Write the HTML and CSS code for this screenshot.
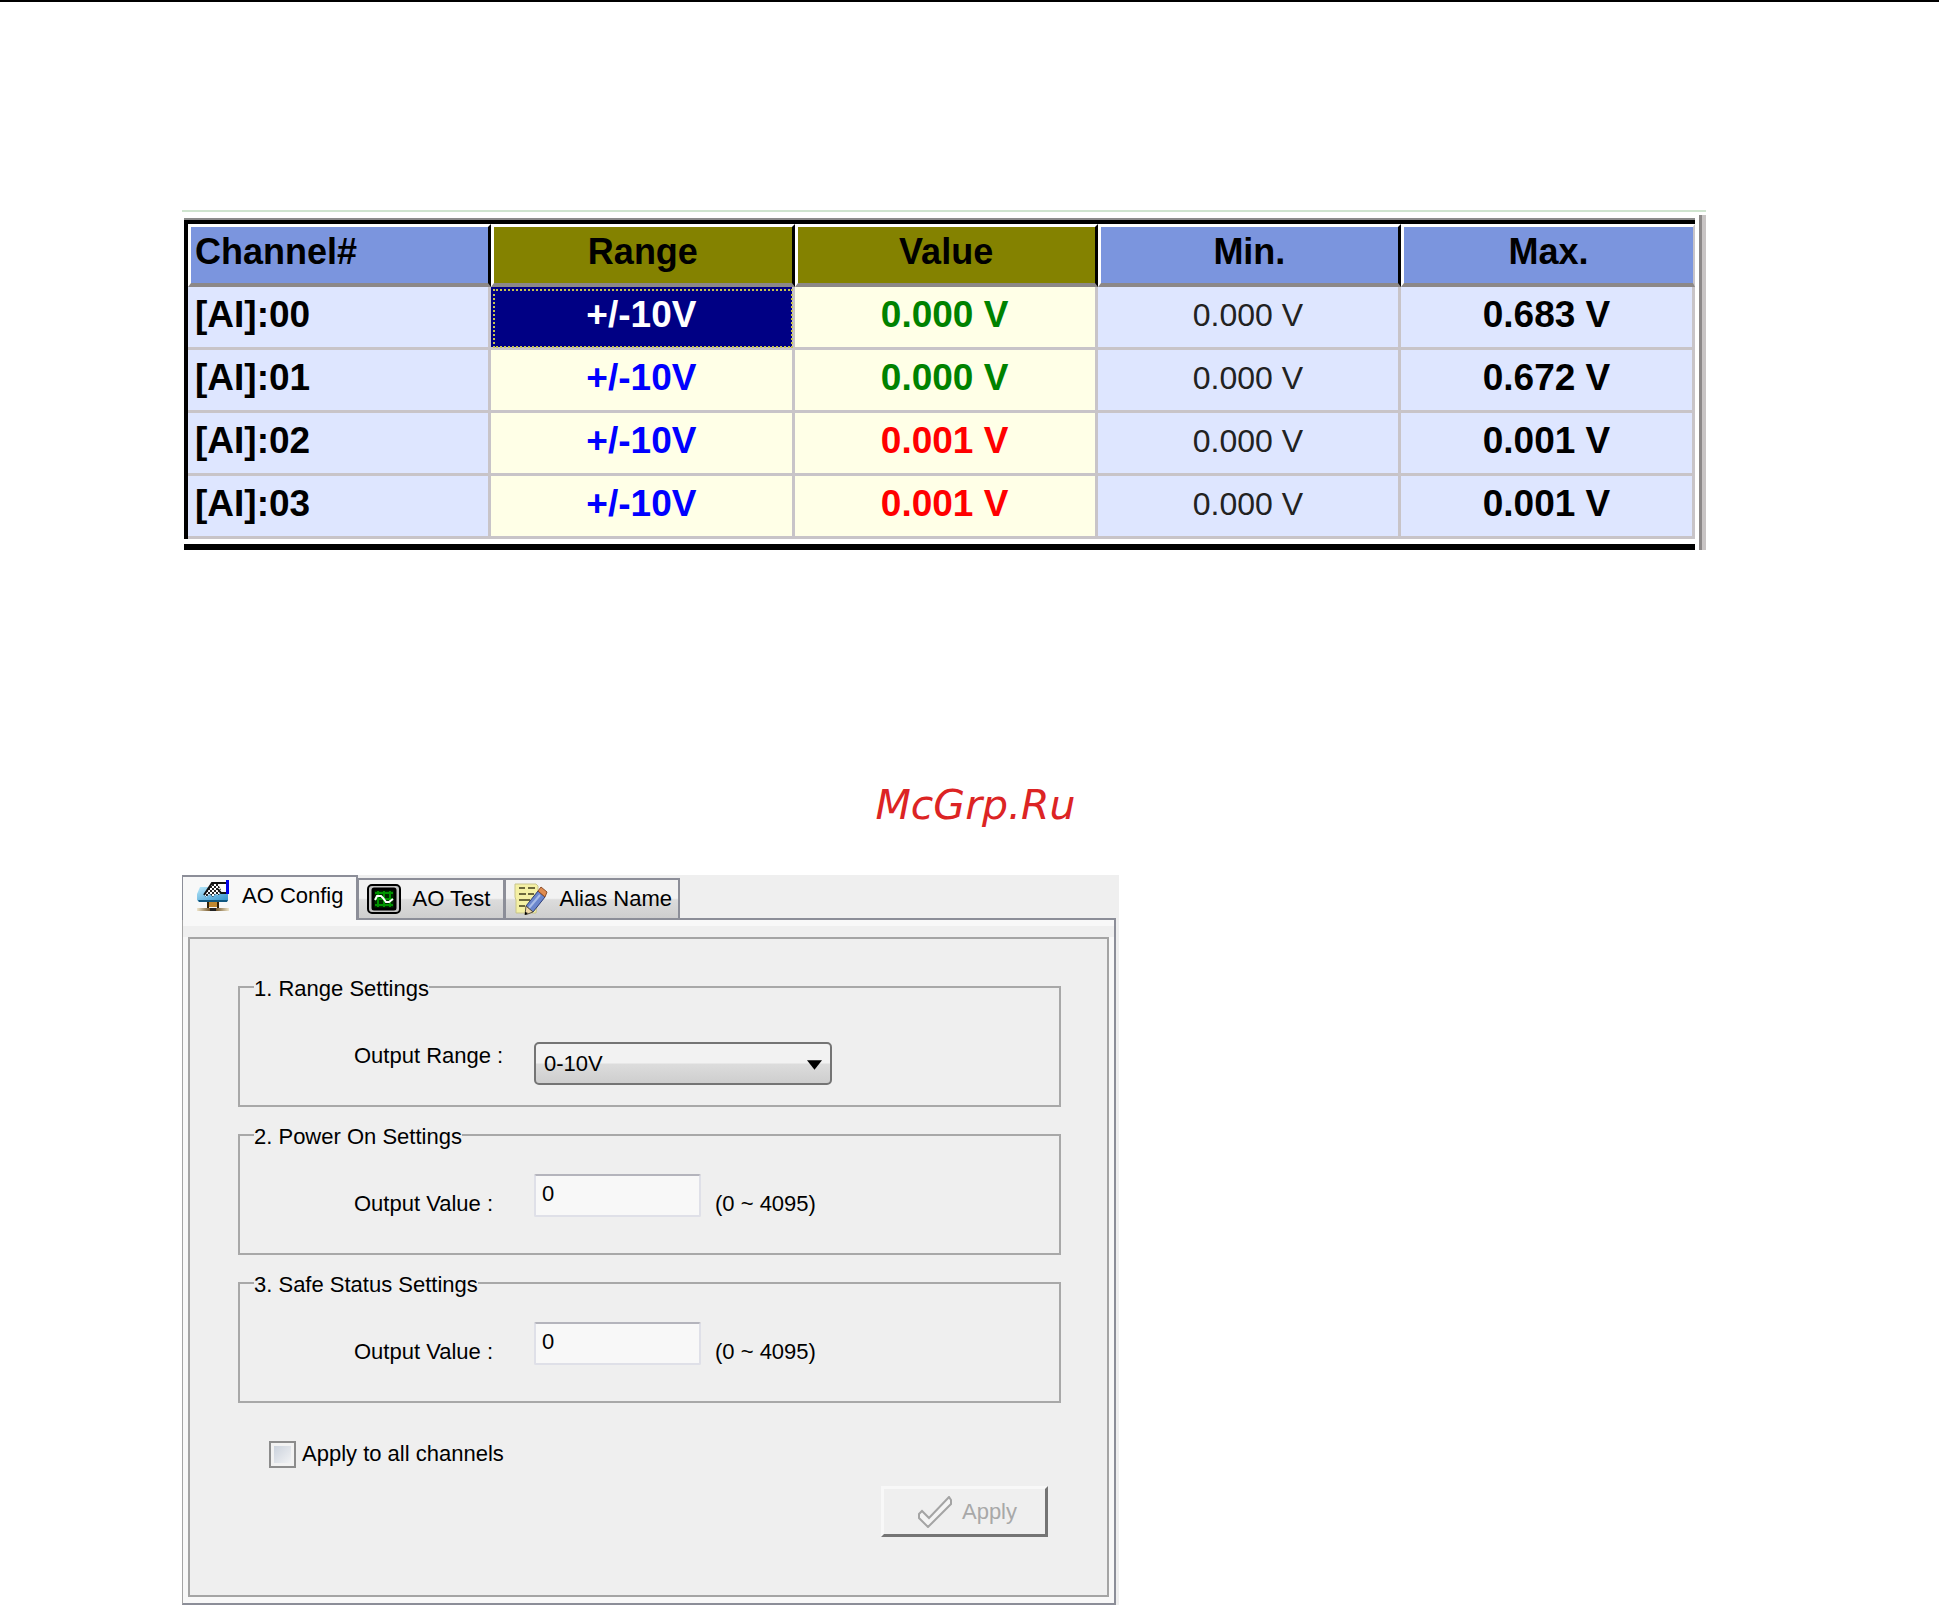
FILE: index.html
```html
<!DOCTYPE html>
<html lang="en">
<head>
<meta charset="utf-8">
<title>Analog channels</title>
<link rel="stylesheet" href="styles.css">
</head>
<body>
<main class="page">
  <section class="monitor">
    <div class="monitor-grid">
      <table class="channels">
        <colgroup><col><col><col><col><col class="col-last"></colgroup>
        <thead>
          <tr><th class="name" scope="col">Channel#</th><th class="olive" scope="col">Range</th><th class="olive" scope="col">Value</th><th scope="col">Min.</th><th scope="col">Max.</th></tr>
        </thead>
        <tbody>
          <tr><th class="name" scope="row">[AI]:00</th><td class="range selected">+/-10V</td><td class="value ok">0.000 V</td><td class="min">0.000 V</td><td>0.683 V</td></tr>
          <tr><th class="name" scope="row">[AI]:01</th><td class="range">+/-10V</td><td class="value ok">0.000 V</td><td class="min">0.000 V</td><td>0.672 V</td></tr>
          <tr><th class="name" scope="row">[AI]:02</th><td class="range">+/-10V</td><td class="value bad">0.001 V</td><td class="min">0.000 V</td><td>0.001 V</td></tr>
          <tr><th class="name" scope="row">[AI]:03</th><td class="range">+/-10V</td><td class="value bad">0.001 V</td><td class="min">0.000 V</td><td>0.001 V</td></tr>
        </tbody>
      </table>
    </div>
    <div class="monitor-edge"></div>
  </section>

  <p class="brand">McGrp.Ru</p>

  <form class="config">
    <div class="tabs" role="tablist">
      <button class="tab active" type="button" role="tab" aria-selected="true">
        <svg class="icon" viewBox="0 0 34 32" aria-hidden="true">
          <defs>
            <linearGradient id="sea" x1="0" y1="0" x2="1" y2="1"><stop offset="0" stop-color="#b8e8fa"/><stop offset="1" stop-color="#2a8cc8"/></linearGradient>
            <linearGradient id="base" x1="0" x2="1"><stop offset="0" stop-color="#efe6cc"/><stop offset=".5" stop-color="#5a3808"/><stop offset="1" stop-color="#efe6cc"/></linearGradient>
            <pattern id="knit" width="4" height="4" patternUnits="userSpaceOnUse"><path d="M0 0h4v4H0z" fill="#fff"/><path d="M0 0h2v2H0zM2 2h2v2H2z" fill="#222"/></pattern>
          </defs>
          <path d="M4 7h26l2 6v7l-2 2H3l-2-2v-6z" fill="url(#sea)"/>
          <path d="M2 20h30l-1 2H3z" fill="#10577f"/>
          <path d="M13 22h8v5h-8z" fill="#c08830"/>
          <path d="M12 22v6M22 22v6" stroke="#302008" stroke-width="2"/>
          <path d="M1 28h32v3H1z" fill="url(#base)"/>
          <path d="M14 28h6v3h-6z" fill="#222"/>
          <path d="M18 3h12v10h-6l-3-4z" fill="#f8f8f8"/>
          <path d="M8 14 15 4h7l3 6-2 5-4-1-2 3-3-3-4 3z" fill="url(#knit)"/>
          <path d="M8 15 16 3h14M22 9l3 4h6" fill="none" stroke="#111" stroke-width="2"/>
          <path d="M30 0h3v14h-3z" fill="#0000e8"/>
        </svg>
        AO Config
      </button>
      <button class="tab" type="button" role="tab" aria-selected="false">
        <svg class="icon" viewBox="0 0 34 32" aria-hidden="true">
          <rect x="1" y="2" width="32" height="28" rx="4" fill="#c4c4c4" stroke="#000" stroke-width="2"/>
          <rect x="6" y="6" width="22" height="20" rx="1" fill="#002c00" stroke="#000" stroke-width="3"/>
          <path d="M8 10h18M8 16h18M8 22h18M11 8v16M17 8v16M23 8v16" stroke="#009400" stroke-width="2"/>
          <path d="M8 17l2-4h4l2 2 3 4h3l4-3" fill="none" stroke="#fff" stroke-width="2"/>
        </svg>
        AO Test
      </button>
      <button class="tab" type="button" role="tab" aria-selected="false">
        <svg class="icon" viewBox="0 0 34 32" aria-hidden="true">
          <path d="M1 1h21l2 2v10l-2 17H2V17L1 14z" fill="#f4f0a4" stroke="#c8c48c" stroke-width="1"/>
          <path d="M5 5h6M14 5h7M5 11h7M14 11h6M5 17h11M5 23h6" stroke="#6c683c" stroke-width="2"/>
          <path d="M24 8l7 6-12 15-7-6z" fill="#6b86cc" stroke="#2c3c78" stroke-width="1"/>
          <path d="M26 12 15 25" stroke="#a8bce8" stroke-width="2"/>
          <path d="M24 8l3-4 6 5-2 5z" fill="#e08c50" stroke="#8c4c28" stroke-width="1"/>
          <path d="M12 23l7 6-8 3z" fill="#f0d8a8" stroke="#585040" stroke-width="1"/>
          <path d="M11 29l3 1-3 2z" fill="#000"/>
        </svg>
        Alias Name
      </button>
    </div>

    <div class="body">
      <div class="panel">
        <fieldset class="group">
          <legend>1. Range Settings</legend>
          <div class="row">
            <label class="caption" for="range">Output Range :</label>
            <div class="select-wrap">
              <select class="select" id="range"><option>0-10V</option></select>
              <svg class="arrow" viewBox="0 0 16 10" aria-hidden="true"><path d="M0 0h16L8 10z"/></svg>
            </div>
          </div>
        </fieldset>
        <fieldset class="group">
          <legend>2. Power On Settings</legend>
          <div class="row">
            <label class="caption" for="power">Output Value :</label>
            <input class="field" id="power" type="text" value="0">
            <span class="hint">(0 ~ 4095)</span>
          </div>
        </fieldset>
        <fieldset class="group">
          <legend>3. Safe Status Settings</legend>
          <div class="row">
            <label class="caption" for="safe">Output Value :</label>
            <input class="field" id="safe" type="text" value="0">
            <span class="hint">(0 ~ 4095)</span>
          </div>
        </fieldset>
        <label class="all"><input class="check" type="checkbox">Apply to all channels</label>
        <div class="actions">
          <button class="apply" type="button" disabled>
            <svg class="icon" viewBox="0 0 34 32" aria-hidden="true"><path d="M1 18l3-3 7 7L31 1l2 3v4L14 27l-4 4-9-9z" fill="#f4f4f4" stroke="#a4a4a4" stroke-width="2"/></svg>
            Apply
          </button>
        </div>
      </div>
    </div>
  </form>
</main>
</body>
</html>
```
FILE: styles.css
```css
* { box-sizing: border-box; }

body {
  margin: 0;
  background: #fff;
  color: #000;
  font-family: "Liberation Sans", Arial, sans-serif;
  font-size: 22px;
  line-height: 28px;
}

button, input, select { font: inherit; color: inherit; }

.page { border-top: 2px solid #000; padding-top: 208px; }

/* Channel monitor */
.monitor {
  display: flex;
  gap: 4px;
  margin: 0 233px 0 182px;
  border-top: 2px solid #cfe4cf;
}

.monitor-grid {
  flex: 1;
  margin: 6px 0 0 2px;
  border-top: 2px solid #8c8c8c;
  border-bottom: 6px solid #000;
}

.monitor-edge {
  width: 7px;
  margin-top: 3px;
  background: #c8c4c4;
  border-left: 3px solid #8c8888;
}

.channels {
  width: 100%;
  table-layout: fixed;
  border-collapse: separate;
  border-spacing: 0;
  border-top: 4px solid #000;
  border-left: 4px solid #000;
  margin-bottom: 5px;
  font-size: 37px;
  line-height: 40px;
  text-align: center;
}

.col-last { width: 294px; }

.channels th, .channels td { padding: 0; font-weight: bold; }

.channels thead th {
  height: 63px;
  padding-bottom: 6px;
  background: #7b95de;
  border: solid #fff;
  border-width: 3px 3px 4px 3px;
  border-right-color: #000;
  border-bottom-color: #8c8888;
  font-size: 36px;
}

.channels thead .olive { background: #848200; }
.channels thead th:last-child { border-right: 2px solid #c8c4c8; }

.channels tbody th, .channels tbody td {
  height: 63px;
  padding-bottom: 5px;
  background: #dee6ff;
  border: solid #c8c4c8;
  border-width: 0 3px 3px 0;
}

.channels tbody .name { text-align: left; padding-left: 7px; }
.channels thead .name { text-align: left; padding-left: 4px; }
.channels tbody .range { background: #ffffe7; color: #00f; }
.channels tbody .value { background: #ffffe7; }
.channels tbody .selected { background: #000084; color: #fff; outline: 2px dotted #c8c450; outline-offset: -4px; }
.channels tbody .ok { color: #008200; }
.channels tbody .bad { color: #f00; }
.channels tbody .min { font-weight: normal; font-size: 32px; color: #222; }

.brand {
  margin: 230px 0 0 12px;
  font: italic 41px/50px "DejaVu Sans", sans-serif;
  color: #dc2424;
  text-align: center;
}

/* Output configuration */
.config {
  width: 937px;
  margin: 45px 0 0 182px;
  background: #efefef;
}

.tabs { display: flex; align-items: flex-end; height: 45px; }

/* top edge of the page body, to the right of the tabs */
.tabs::after {
  content: "";
  flex: 1;
  margin-right: 3px;
  border-bottom: 2px solid #8c8e98;
}

.tab {
  display: flex;
  align-items: center;
  gap: 12px;
  min-width: 147px;
  height: 42px;
  padding: 0 6px 0 8px;
  background: linear-gradient(#f2f2f2 48%, #dcdcdc 52%, #cecece);
  border: 2px solid #8c8e98;
  border-left-width: 1px;
  white-space: nowrap;
}

.tab.active {
  height: 45px;
  padding: 0 12px 6px 13px;
  background: #f8f8f8;
  border-bottom: 0;
}

.icon { width: 34px; height: 32px; flex: none; }

.body {
  margin-right: 3px;
  padding: 17px 5px 6px;
  background: linear-gradient(#f8f8f8 6px, #efefef 6px, #efefef 17px, #f8f8f8 17px);
  border: 2px solid #8c8e98;
  border-left: 1px solid #a4a4a4;
  border-top: 0;
}

.panel {
  padding: 32px 46px 58px 48px;
  background: #efefef;
  border: 2px solid #a4a4a4;
}

.group {
  height: 136px;
  margin: 0 0 12px;
  padding: 0;
  border: 2px solid #a8a8a8;
  min-width: 0;
}

.group legend { margin-left: 14px; padding: 4px 0 0; }

.row { display: flex; align-items: flex-start; padding-left: 114px; }

.caption { width: 180px; margin-top: 39px; }

.select-wrap { position: relative; margin-top: 39px; }

.select {
  display: block;
  width: 298px;
  height: 43px;
  padding: 0 8px;
  appearance: none;
  background: linear-gradient(#f2f2f2 48%, #dcdcdc 52%, #cecece);
  border: 2px solid #747474;
  border-radius: 5px;
}

.arrow { position: absolute; right: 10px; top: 18px; width: 15px; height: 10px; pointer-events: none; }

.field {
  width: 167px;
  height: 43px;
  margin-top: 23px;
  padding: 0 6px 4px;
  background: #f8f8f8;
  border: 2px solid #dfe0e8;
  border-top-color: #b4b4bc;
  border-radius: 2px;
}

.hint { margin: 39px 0 0 14px; }

.all { display: flex; align-items: center; gap: 6px; width: max-content; margin: 37px 0 0 31px; }

.check {
  appearance: none;
  width: 27px;
  height: 27px;
  margin: 0;
  background: linear-gradient(135deg, #c4ccd8, #f8f8f8);
  border: 2px solid #8c8c8c;
  box-shadow: inset 0 0 0 3px #f2f2f2;
}

.actions { display: flex; justify-content: flex-end; margin: 18px 13px 0 0; }

.apply {
  display: flex;
  align-items: center;
  justify-content: center;
  gap: 10px;
  width: 167px;
  height: 51px;
  padding: 0 0 0 6px;
  background: #efefef;
  border: 3px solid #f8f8f8;
  border-right-color: #747474;
  border-bottom-color: #747474;
}

.apply:disabled { color: #a8a8a8; }
```
